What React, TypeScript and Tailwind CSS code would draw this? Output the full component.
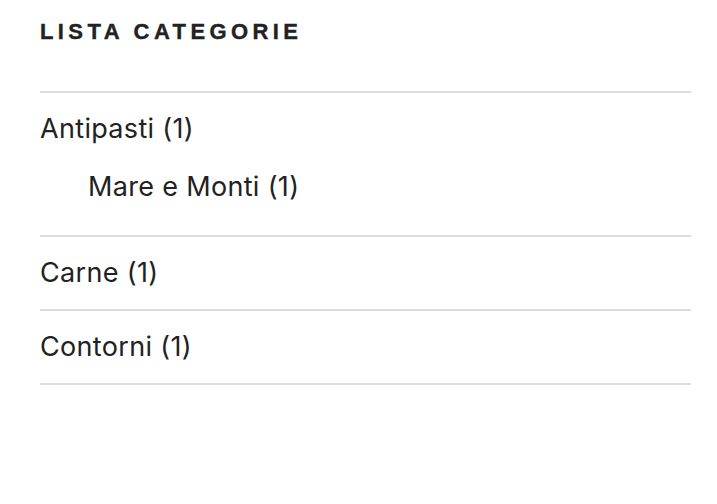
const categories = [
  { name: "Antipasti", count: 1, children: [{ name: "Mare e Monti", count: 1 }] },
  { name: "Carne", count: 1, children: [] },
  { name: "Contorni", count: 1, children: [] },
];

export default function App() {
  return (
    <div className="min-h-screen bg-white pl-[40px] pr-[26px] pt-[19px] text-[#222]">
      <h2 className="font-['Liberation_Sans',Arial,sans-serif] text-[22px] font-bold uppercase leading-[26px] tracking-[0.2em] text-[#222] [-webkit-text-stroke:0.4px_#222]">
        Lista categorie
      </h2>
      <ul className="mt-[46px] border-t-2 border-[#ddd] font-['Inter','Noto_Sans',sans-serif] text-[27px] leading-[36px] tracking-[0.012em]">
        {categories.map((cat) => (
          <li key={cat.name} className="border-b-2 border-[#ddd] py-[18px]">
            <a className="text-[#222]">
              {cat.name} ({cat.count})
            </a>
            {cat.children.length > 0 && (
              <ul className="pl-[48px] pt-[22px] pb-[12px]">
                {cat.children.map((c) => (
                  <li key={c.name}>
                    {c.name} ({c.count})
                  </li>
                ))}
              </ul>
            )}
          </li>
        ))}
      </ul>
    </div>
  );
}
